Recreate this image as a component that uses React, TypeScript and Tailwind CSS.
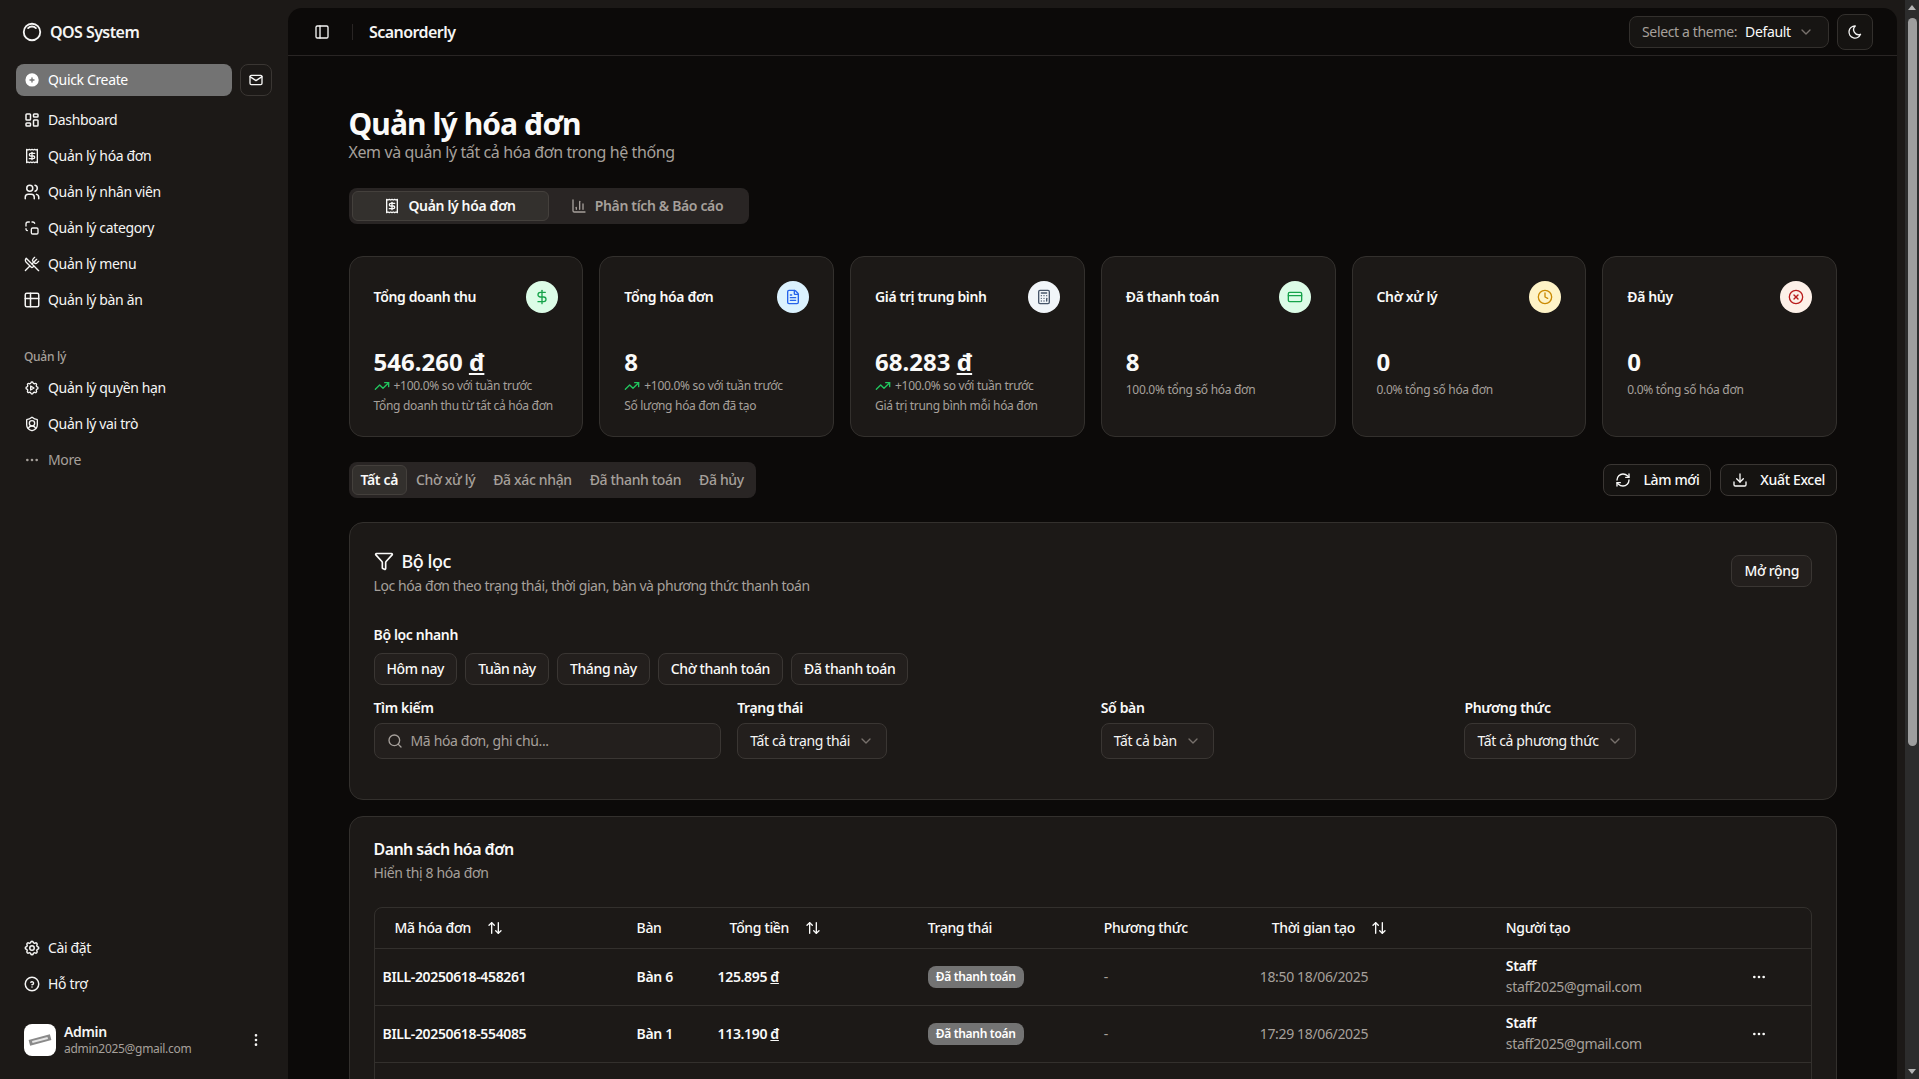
import React from "react";
import {
  ArrowUpDown,
  Calculator,
  ChartColumn,
  ChevronDown,
  Clock,
  CreditCard,
  DollarSign,
  Download,
  Ellipsis,
  FileText,
  Funnel,
  PanelLeft,
  Receipt,
  RefreshCw,
  Search,
  ShieldUser,
  TrendingUp,
  UtensilsCrossed,
  CircleX,
} from "lucide-react";
import {
  TbCirclePlusFilled,
  TbDots,
  TbDotsVertical,
  TbHelpCircle,
  TbInnerShadowTop,
  TbLayoutDashboard,
  TbMail,
  TbMoon,
  TbSettings,
  TbSettingsAutomation,
  TbTable,
  TbUsers,
} from "react-icons/tb";

function CategoryIcon({ className }: { className?: string }) {
  return (
    <svg viewBox="0 0 24 24" fill="none" stroke="currentColor" strokeWidth={2} strokeLinecap="round" strokeLinejoin="round" className={className}>
      <path d="M3 9V6a3 3 0 0 1 3-3h2" />
      <path d="M12 3h1a3 3 0 0 1 3 2" />
      <path d="M3 13v1a3 3 0 0 0 2 2" />
      <rect x="11" y="12" width="10" height="9" rx="2" />
    </svg>
  );
}

function NavItem({ icon, label, muted }: { icon: React.ReactNode; label: string; muted?: boolean }) {
  return (
    <div className={`flex h-8 items-center gap-2 rounded-lg px-2 text-sm ${muted ? "text-[#a6a09b]" : "text-[#f5f5f4]"}`}>
      {icon}
      <span>{label}</span>
    </div>
  );
}

function Sidebar() {
  const i = "h-4 w-4 shrink-0";
  const big = "-mx-px h-[18px] w-[18px] shrink-0";
  return (
    <aside className="flex h-full w-[288px] shrink-0 flex-col px-4 pb-[15px] pt-4 text-[#f5f5f4]">
      <div className="flex h-8 items-center gap-[7px] pl-[5px]">
        <TbInnerShadowTop className="h-[22px] w-[22px] shrink-0" />
        <span className="text-base font-semibold tracking-[-0.035em]!">QOS System</span>
      </div>
      <div className="mt-4 flex items-center gap-2">
        <div className="flex h-8 flex-1 items-center gap-2 rounded-lg bg-[#737373] px-2 text-sm text-white">
          <TbCirclePlusFilled className={i} />
          <span>Quick Create</span>
        </div>
        <div className="flex h-8 w-8 items-center justify-center rounded-lg border border-[#3a3633] bg-[#1c1917]">
          <TbMail className={i} />
        </div>
      </div>
      <nav className="mt-2 flex flex-col gap-1">
        <NavItem icon={<TbLayoutDashboard className={big} />} label="Dashboard" />
        <NavItem icon={<Receipt className={i} />} label="Quản lý hóa đơn" />
        <NavItem icon={<TbUsers className={big} />} label="Quản lý nhân viên" />
        <NavItem icon={<CategoryIcon className={i} />} label="Quản lý category" />
        <NavItem icon={<UtensilsCrossed className={i} />} label="Quản lý menu" />
        <NavItem icon={<TbTable className={big} />} label="Quản lý bàn ăn" />
      </nav>
      <div className="mt-[25px] flex h-8 items-center px-2 text-xs font-medium text-[#a6a09b]">Quản lý</div>
      <nav className="-mt-px flex flex-col gap-1">
        <NavItem icon={<TbSettingsAutomation className={i} />} label="Quản lý quyền hạn" />
        <NavItem icon={<ShieldUser className={i} />} label="Quản lý vai trò" />
        <NavItem icon={<TbDots className={i} />} label="More" muted />
      </nav>
      <nav className="mt-auto flex flex-col gap-1">
        <NavItem icon={<TbSettings className={big} />} label="Cài đặt" />
        <NavItem icon={<TbHelpCircle className={big} />} label="Hỗ trợ" />
      </nav>
      <div className="mt-4 flex h-12 items-center gap-2 px-2">
        <div className="flex h-8 w-8 shrink-0 items-center justify-center rounded-lg bg-white">
          <svg viewBox="0 0 32 32" className="h-8 w-8">
            <g transform="rotate(-15 16 16)">
              <rect x="5" y="13" width="22" height="6" fill="#8a8a8a" />
              <rect x="8" y="15" width="16" height="2" fill="#e5e5e5" />
            </g>
          </svg>
        </div>
        <div className="flex min-w-0 flex-1 flex-col">
          <span className="text-sm font-semibold leading-[18px]">Admin</span>
          <span className="text-xs leading-4 text-[#a6a09b]">admin2025@gmail.com</span>
        </div>
        <TbDotsVertical className={i} />
      </div>
    </aside>
  );
}

function Header() {
  return (
    <header className="flex h-12 shrink-0 items-center border-b border-[#292524] pl-[26px] pr-6">
      <PanelLeft className="h-4 w-4 shrink-0 text-[#f5f5f4]" />
      <div className="ml-[22px] h-4 w-px bg-[#292524]" />
      <span className="ml-4 text-base font-semibold tracking-[-0.035em]! text-[#f5f5f4]">Scanorderly</span>
      <div className="ml-auto flex items-center gap-2">
        <div className="flex h-8 w-[200px] items-center whitespace-nowrap rounded-lg border border-[#33302d] bg-[#171513] pl-3 pr-[14px] text-sm">
          <span className="text-[#a6a09b]">Select a theme:</span>
          <span className="ml-2 text-[#fafaf9]">Default</span>
          <ChevronDown className="ml-auto h-4 w-4 text-[#78716c]" />
        </div>
        <div className="flex h-9 w-9 items-center justify-center rounded-lg border border-[#33302d] bg-[#151311]">
          <TbMoon className="h-4 w-4 text-[#f5f5f4]" />
        </div>
      </div>
    </header>
  );
}

type Stat = {
  title: string;
  value: string;
  unit?: boolean;
  icon: React.ReactNode;
  bg: string;
  trend?: string;
  desc: string;
};

const stats: Stat[] = [
  { title: "Tổng doanh thu", value: "546.260", unit: true, icon: <DollarSign className="h-4 w-4 text-[#16a34a]" />, bg: "bg-[#dcfce7]", trend: "+100.0% so với tuần trước", desc: "Tổng doanh thu từ tất cả hóa đơn" },
  { title: "Tổng hóa đơn", value: "8", icon: <FileText className="h-4 w-4 text-[#2563eb]" />, bg: "bg-[#dbf2fe]", trend: "+100.0% so với tuần trước", desc: "Số lượng hóa đơn đã tạo" },
  { title: "Giá trị trung bình", value: "68.283", unit: true, icon: <Calculator className="h-4 w-4 text-[#475569]" />, bg: "bg-[#f1f5f9]", trend: "+100.0% so với tuần trước", desc: "Giá trị trung bình mỗi hóa đơn" },
  { title: "Đã thanh toán", value: "8", icon: <CreditCard className="h-4 w-4 text-[#16a34a]" />, bg: "bg-[#dcfce7]", desc: "100.0% tổng số hóa đơn" },
  { title: "Chờ xử lý", value: "0", icon: <Clock className="h-4 w-4 text-[#ca8a04]" />, bg: "bg-[#fef3c7]", desc: "0.0% tổng số hóa đơn" },
  { title: "Đã hủy", value: "0", icon: <CircleX className="h-4 w-4 text-[#b91c1c]" />, bg: "bg-[#fdf0e8]", desc: "0.0% tổng số hóa đơn" },
];

function StatCard({ s }: { s: Stat }) {
  return (
    <div className="flex h-[181px] flex-col rounded-[14px] border border-[#33302d] bg-[#1c1917] px-6 pt-6">
      <div className="flex h-8 items-center justify-between">
        <span className="text-sm font-semibold text-[#fafaf9]">{s.title}</span>
        <span className={`flex h-8 w-8 items-center justify-center rounded-full ${s.bg}`}>{s.icon}</span>
      </div>
      <div className="mt-[33px] h-8 text-2xl font-bold leading-8 tracking-normal! text-[#fafaf9]">
        {s.value}
        {s.unit && " "}
        {s.unit && <span className="tracking-normal! underline">đ</span>}
      </div>
      {s.trend ? (
        <>
          <div className="flex h-4 items-center gap-1 text-xs text-[#a6a09b]">
            <TrendingUp className="h-4 w-4 text-[#22c55e]" />
            <span>{s.trend}</span>
          </div>
          <div className="mt-1 text-xs leading-4 text-[#a6a09b]">{s.desc}</div>
        </>
      ) : (
        <div className="mt-1 text-xs leading-4 text-[#a6a09b]">{s.desc}</div>
      )}
    </div>
  );
}

function OutlineBtn({ children, className = "" }: { children: React.ReactNode; className?: string }) {
  return (
    <div className={`flex h-8 items-center rounded-lg border border-[#3a3633] text-sm font-medium text-[#fafaf9] ${className}`}>
      {children}
    </div>
  );
}

function Filters() {
  return (
    <section className="h-[278px] rounded-[14px] border border-[#33302d] bg-[#1c1917] px-6 pt-6">
      <div className="flex items-start justify-between">
        <div>
          <div className="flex h-7 items-center gap-2 text-lg font-medium text-[#fafaf9]">
            <Funnel className="h-5 w-5" />
            <span>Bộ lọc</span>
          </div>
          <p className="mt-px text-sm tracking-[-0.03em]! text-[#a6a09b]">Lọc hóa đơn theo trạng thái, thời gian, bàn và phương thức thanh toán</p>
        </div>
        <OutlineBtn className="mt-[8px] bg-[#231f1d] px-3">Mở rộng</OutlineBtn>
      </div>
      <div className="mt-[29px] text-sm font-semibold leading-5 text-[#fafaf9]">Bộ lọc nhanh</div>
      <div className="mt-2 flex gap-2">
        {["Hôm nay", "Tuần này", "Tháng này", "Chờ thanh toán", "Đã thanh toán"].map((t) => (
          <OutlineBtn key={t} className="bg-[#231f1d] px-3">
            {t}
          </OutlineBtn>
        ))}
      </div>
      <div className="mt-[13px] grid grid-cols-4 gap-4">
        <div>
          <div className="text-sm font-semibold leading-5 text-[#fafaf9]">Tìm kiếm</div>
          <div className="mt-[5px] flex h-9 items-center gap-2 rounded-lg border border-[#3a3633] bg-[#231f1d] px-3 text-sm text-[#a6a09b]">
            <Search className="h-4 w-4" />
            <span>Mã hóa đơn, ghi chú...</span>
          </div>
        </div>
        {[
          ["Trạng thái", "Tất cả trạng thái"],
          ["Số bàn", "Tất cả bàn"],
          ["Phương thức", "Tất cả phương thức"],
        ].map(([l, v]) => (
          <div key={l}>
            <div className="text-sm font-semibold leading-5 text-[#fafaf9]">{l}</div>
            <div className="mt-[5px] inline-flex h-9 items-center gap-2 rounded-lg border border-[#3a3633] bg-[#231f1d] px-3 text-sm text-[#f5f5f4]">
              <span>{v}</span>
              <ChevronDown className="h-4 w-4 text-[#78716c]" />
            </div>
          </div>
        ))}
      </div>
    </section>
  );
}

function SortHead({ label }: { label: string }) {
  return (
    <span className="inline-flex items-center gap-2 pl-3">
      <span>{label}</span>
      <ArrowUpDown className="ml-2 h-4 w-4" />
    </span>
  );
}

const rows = [
  { id: "BILL-20250618-458261", table: "Bàn 6", total: "125.895", time: "18:50 18/06/2025" },
  { id: "BILL-20250618-554085", table: "Bàn 1", total: "113.190", time: "17:29 18/06/2025" },
];

function InvoiceTable() {
  const th = "h-10 px-2 text-left align-middle text-sm font-medium text-[#fafaf9]";
  const td = "px-2 align-middle text-sm";
  return (
    <section className="rounded-[14px] border border-[#33302d] bg-[#1c1917] px-6 pb-6 pt-[22px]">
      <h2 className="text-base font-semibold leading-5 tracking-[-0.035em]! text-[#fafaf9]">Danh sách hóa đơn</h2>
      <p className="mt-1 text-sm leading-5 text-[#a6a09b]">Hiển thị 8 hóa đơn</p>
      <div className="mt-6 overflow-hidden rounded-lg border border-[#33302d]">
        <table className="w-full table-fixed border-collapse">
          <colgroup>
            <col className="w-[254px]" />
            <col className="w-[81px]" />
            <col className="w-[210px]" />
            <col className="w-[176px]" />
            <col className="w-[156px]" />
            <col className="w-[246px]" />
            <col className="w-[242px]" />
            <col className="w-[71px]" />
          </colgroup>
          <thead>
            <tr className="border-b border-[#33302d]">
              <th className={th}><SortHead label="Mã hóa đơn" /></th>
              <th className={th}>Bàn</th>
              <th className={th}><SortHead label="Tổng tiền" /></th>
              <th className={th}>Trạng thái</th>
              <th className={th}>Phương thức</th>
              <th className={th}><SortHead label="Thời gian tạo" /></th>
              <th className={th}>Người tạo</th>
              <th className={th} />
            </tr>
          </thead>
          <tbody>
            {rows.map((r) => (
              <tr key={r.id} className="h-[57px] border-b border-[#33302d]">
                <td className={`${td} font-semibold text-[#fafaf9]`}>{r.id}</td>
                <td className={`${td} font-semibold text-[#fafaf9]`}>{r.table}</td>
                <td className={`${td} font-semibold text-[#fafaf9]`}>
                  {r.total} <span className="underline">đ</span>
                </td>
                <td className={td}>
                  <span className="inline-flex h-[22px] items-center rounded-lg bg-[#737373] px-2 text-xs font-semibold text-white">Đã thanh toán</span>
                </td>
                <td className={`${td} text-[#a6a09b]`}>-</td>
                <td className={`${td} text-[#a6a09b]`}>{r.time}</td>
                <td className={td}>
                  <div className="font-semibold leading-5 text-[#fafaf9]">Staff</div>
                  <div className="mt-px leading-5 text-[#a6a09b]">staff2025@gmail.com</div>
                </td>
                <td className={td}>
                  <Ellipsis className="ml-[3px] h-4 w-4 text-[#fafaf9]" />
                </td>
              </tr>
            ))}
            <tr className="h-[57px]">
              <td className={td} colSpan={6} />
              <td className={td}>
                <div className="font-semibold leading-5 text-[#fafaf9]">Staff</div>
              </td>
              <td className={td} />
            </tr>
          </tbody>
        </table>
      </div>
    </section>
  );
}

function Scrollbar() {
  return (
    <div className="flex h-full w-[14px] shrink-0 flex-col items-center bg-[#2c2c2c]">
      <svg viewBox="0 0 14 14" className="h-[16px] w-[14px] shrink-0 fill-[#b4b4b4]">
        <path d="M7 4l4 5H3z" />
      </svg>
      <div className="mt-[2px] h-[728px] w-[9px] rounded-[5px] bg-[#9e9e9e]" />
      <svg viewBox="0 0 14 14" className="mt-auto h-[16px] w-[14px] shrink-0 fill-[#b4b4b4]">
        <path d="M7 10l4-5H3z" />
      </svg>
    </div>
  );
}

export default function App() {
  return (
    <div className="flex h-screen overflow-hidden bg-[#1c1917] font-['Noto_Sans',sans-serif] [&_*]:tracking-[-0.025em]">
      <Sidebar />
      <div className="min-w-0 flex-1 pr-2 pt-2">
        <main className="h-[1200px] rounded-t-[14px] bg-[#0c0a09]">
          <Header />
          <div className="pl-[60.5px] pr-[60px] pt-[50px]">
            <h1 className="text-3xl font-bold leading-9 tracking-[-0.03em]! text-[#fafaf9]">Quản lý hóa đơn</h1>
            <p className="mt-[-2px] text-base leading-6 text-[#a6a09b]">Xem và quản lý tất cả hóa đơn trong hệ thống</p>
            <div className="mt-6 grid h-9 w-[400px] grid-cols-2 rounded-lg bg-[#292524] p-[3px] text-sm font-semibold">
              <div className="flex items-center justify-center gap-2 rounded-md border border-[#44403c] bg-[#33302d] text-[#fafaf9]">
                <Receipt className="h-4 w-4" />
                <span>Quản lý hóa đơn</span>
              </div>
              <div className="flex items-center justify-center gap-2 text-[#a6a09b]">
                <ChartColumn className="h-4 w-4" />
                <span>Phân tích &amp; Báo cáo</span>
              </div>
            </div>
            <div className="mt-8 grid grid-cols-6 gap-4">
              {stats.map((s) => (
                <StatCard key={s.title} s={s} />
              ))}
            </div>
            <div className="mt-[25px] flex items-center justify-between">
              <div className="flex h-9 items-center rounded-lg bg-[#292524] p-[3px] text-sm font-medium text-[#a6a09b]">
                <span className="flex h-full items-center rounded-md border border-[#44403c] bg-[#33302d] px-2 font-semibold text-[#fafaf9]">Tất cả</span>
                <span className="px-[9px]">Chờ xử lý</span>
                <span className="px-[9px]">Đã xác nhận</span>
                <span className="px-[9px]">Đã thanh toán</span>
                <span className="px-[9px]">Đã hủy</span>
              </div>
              <div className="flex gap-[9px]">
                <OutlineBtn className="gap-3 bg-[#151311] px-[11px]">
                  <RefreshCw className="h-4 w-4" />
                  <span>Làm mới</span>
                </OutlineBtn>
                <OutlineBtn className="gap-3 bg-[#151311] px-[11px]">
                  <Download className="h-4 w-4" />
                  <span>Xuất Excel</span>
                </OutlineBtn>
              </div>
            </div>
            <div className="mt-6 flex flex-col gap-4">
              <Filters />
              <InvoiceTable />
            </div>
          </div>
        </main>
      </div>
      <Scrollbar />
    </div>
  );
}
